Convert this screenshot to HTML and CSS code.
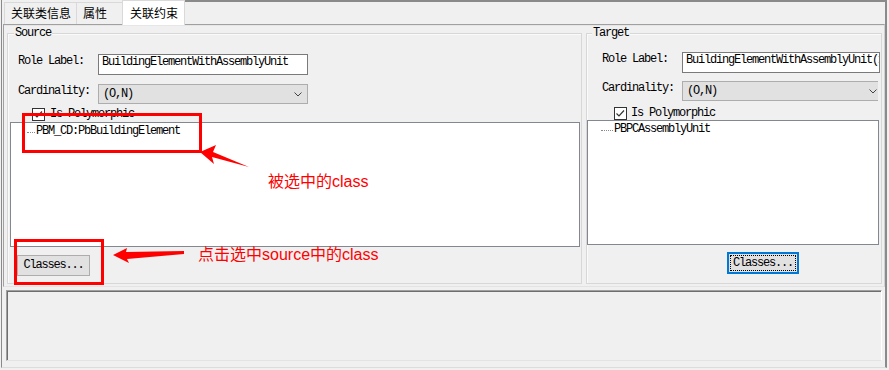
FILE: index.html
```html
<!DOCTYPE html>
<html>
<head>
<meta charset="utf-8">
<link rel="stylesheet" href="styles.css">
</head>
<body>
<div class="screen">
  <div class="frame">
    <div class="tabs">
      <div class="tab tab-info">关联类信息</div>
      <div class="tab tab-attr">属性</div>
      <div class="tab tab-active">关联约束</div>
      <div class="tab-fill"></div>
    </div>
    <div class="panel">
      <div class="group group-source">
        <div class="group-title">Source</div>
        <div class="row row-role"><span class="label">Role Label:</span><div class="input input-source">BuildingElementWithAssemblyUnit</div></div>
        <div class="row row-card"><span class="label">Cardinality:</span><div class="select select-source"><span>(O,N)</span><svg class="caret" width="8" height="5" viewBox="0 0 8 5"><polyline points="0.5,0.5 4,4 7.5,0.5" fill="none" stroke="#444" stroke-width="1"/></svg></div></div>
        <div class="row row-poly poly-source"><span class="check"><svg width="13" height="13" viewBox="0 0 13 13"><rect x="0.5" y="0.5" width="12" height="12" fill="#fff" stroke="#333"/><polyline points="2.5,6.5 5,9 10,3.5" fill="none" stroke="#333" stroke-width="1.2"/></svg></span><span>Is Polymorphic</span></div>
        <div class="list list-source"><div class="item"><span class="dots dots-source"></span>PBM_CD:PbBuildingElement</div></div>
        <div class="btn btn-source">Classes...</div>
      </div>
      <div class="group group-target">
        <div class="group-title">Target</div>
        <div class="row row-role"><span class="label">Role Label:</span><div class="input input-target">BuildingElementWithAssemblyUnit(1:N)</div></div>
        <div class="row row-card"><span class="label">Cardinality:</span><div class="select-clip"><div class="select select-target"><span>(O,N)</span><svg class="caret" width="8" height="5" viewBox="0 0 8 5"><polyline points="0.5,0.5 4,4 7.5,0.5" fill="none" stroke="#444" stroke-width="1"/></svg></div></div></div>
        <div class="row row-poly poly-target"><span class="check"><svg width="13" height="13" viewBox="0 0 13 13"><rect x="0.5" y="0.5" width="12" height="12" fill="#fff" stroke="#333"/><polyline points="2.5,6.5 5,9 10,3.5" fill="none" stroke="#333" stroke-width="1.2"/></svg></span><span>Is Polymorphic</span></div>
        <div class="list list-target"><div class="item"><span class="dots dots-target"></span>PBPCAssemblyUnit</div></div>
        <div class="btn btn-target"><span class="focus">Classes...</span></div>
      </div>
    </div>
    <div class="bottom-box"></div>
  </div>

  <svg class="marks" width="889" height="370" viewBox="0 0 889 370">
    <rect x="23.5" y="114.5" width="177" height="37" fill="none" stroke="#ff0000" stroke-width="3"/>
    <rect x="15.5" y="240.5" width="87" height="43" fill="none" stroke="#ff0000" stroke-width="3"/>
    <polygon points="200,152 216,145 213,152 249,167 212,157 214,164" fill="#ff0000"/>
    <polygon points="113,255 127,248 126,252 184,251 184,254 127,259 129,263" fill="#ff0000"/>
  </svg>
  <span class="note note-1">被选中的class</span>
  <span class="note note-2">点击选中source中的class</span>
</div>
</body>
</html>
```

FILE: styles.css
```css
* { box-sizing: border-box; }

html, body {
  margin: 0;
  padding: 0;
  background: #f0f0f0;
}

body {
  width: 889px;
  height: 370px;
  overflow: hidden;
  font-family: "Liberation Mono", "DejaVu Sans Mono", monospace;
  font-size: 12px;
  letter-spacing: -1.2px;
  color: #000;
}

.screen {
  position: relative;
  width: 889px;
  height: 370px;
}

.frame {
  margin: 0 2px 0 1px;
  height: 368px;
  border-left: 1px solid #8a8a8a;
  border-right: 2px solid #8a8a8a;
  border-bottom: 1px solid #dcdcdc;
  padding-left: 1px;
  display: flex;
  flex-direction: column;
}

/* tabs */
.tabs {
  display: flex;
  align-items: flex-end;
  height: 24px;
}

.tab {
  font-family: "Noto Sans CJK SC", "Liberation Sans", sans-serif;
  letter-spacing: 0;
  font-size: 12px;
  line-height: 20px;
  height: 22px;
  border: 1px solid #d9d9d9;
  border-bottom: none;
  background: #f0f0f0;
  padding-left: 6px;
}

.tab-info { width: 73px; margin-left: 1px; }
.tab-attr { width: 47px; margin-left: -1px; }

.tab-active {
  width: 63px;
  height: 25px;
  margin-left: -1px;
  margin-bottom: -1px;
  padding-left: 7px;
  line-height: 23px;
  background: #ffffff;
  position: relative;
  z-index: 1;
}

.tab-fill {
  flex: 1;
  align-self: flex-start;
  border-top: 2px solid #8a8a8a;
}

/* panel */
.panel {
  display: flex;
  gap: 4px;
  border-top: 1px solid #a0a0a0;
  border-left: 1px solid #a0a0a0;
  border-right: 1px solid #d0d0d0;
  border-bottom: 1px solid #e3e3e3;
  box-shadow: inset 0 1px 0 #e6e6e6;
  padding: 8px 2px 2px 3px;
}

.group {
  border: 1px solid #d7d7d7;
  box-shadow: inset 1px 1px 0 #fafafa;
  padding-bottom: 7px;
  display: flex;
  flex-direction: column;
  align-items: flex-start;
}

.group-source { flex: 0 0 575px; }
.group-target { flex: 1; min-width: 0; }

.group-title {
  margin-top: -7px;
  line-height: 12px;
  height: 12px;
  background: #f0f0f0;
  padding: 0 1px;
}

.group-source .group-title { margin-left: 6px; }
.group-target .group-title { margin-left: 5px; }

.row {
  display: flex;
  align-items: center;
}

.group-source .row-role,
.group-source .row-card { padding-left: 10px; }
.group-target .row-role,
.group-target .row-card { padding-left: 15px; }

.label {
  width: 80px;
  flex: 0 0 80px;
  white-space: nowrap;
  line-height: 12px;
  padding-bottom: 7px;
}

.row-role { margin-top: 15px; height: 21px; }
.row-card { margin-top: 9px; height: 20px; }

.group-target .row-role { margin-top: 13px; }
.group-target .row-card { margin-top: 8px; }
.group-target .row-poly { margin-top: 5px; }
.group-target .list { margin-top: 0; }

.input {
  height: 21px;
  background: #fff;
  border: 1px solid #7a7a7a;
  padding-left: 3px;
  line-height: 15px;
  white-space: nowrap;
  overflow: hidden;
}

.input-source { width: 210px; }
.input-target { width: 198px; flex: 0 0 198px; }

.select {
  height: 20px;
  background: #e1e1e1;
  border: 1px solid #adadad;
  padding: 0 5px 0 4px;
  line-height: 18px;
  display: flex;
  align-items: center;
  justify-content: space-between;
}

.select-source { width: 210px; }

.select-clip {
  width: 196px;
  flex: 0 0 196px;
  overflow: hidden;
}

.select-target { width: 201px; }

.caret { display: block; }

.row-poly {
  margin-top: 3px;
  height: 14px;
}

.poly-source { padding-left: 24px; gap: 5px; }
.poly-target { padding-left: 27px; gap: 4px; }

.check { display: flex; }
.check svg { display: block; }

.list {
  margin-top: 1px;
  height: 125px;
  background: #fff;
  border: 1px solid #828790;
  padding-top: 1px;
}

.list-source { width: 570px; margin-left: 2px; }
.list-target { width: 292px; margin-left: 0; }

.item {
  display: flex;
  align-items: center;
  line-height: 14px;
  white-space: nowrap;
}

.dots {
  display: block;
  height: 0;
  border-top: 1px dotted #8a8a8a;
  margin-top: 2px;
}

.dots-source { width: 8px; margin-left: 16px; margin-right: 1px; }
.dots-target { width: 12px; margin-left: 13px; margin-right: 1px; }

.btn {
  margin-top: 8px;
  height: 21px;
  background: #e1e1e1;
  border: 1px solid #adadad;
  text-align: center;
  line-height: 19px;
}

.btn-source { width: 73px; margin-left: 9px; }

.btn-target {
  width: 72px;
  height: 22px;
  margin-top: 7px;
  margin-left: 140px;
  border: 2px solid #0078d7;
  padding: 1px;
  line-height: 16px;
}

.focus {
  display: block;
  height: 16px;
  border: 1px dotted #000;
  line-height: 14px;
}

/* bottom */
.bottom-box {
  margin: 3px 3px 0 3px;
  height: 71px;
  border-top: 1px solid #a0a0a0;
  border-left: 1px solid #a0a0a0;
  border-right: 1px solid #ffffff;
  border-bottom: 1px solid #e3e3e3;
  box-shadow: inset 1px 1px 0 #6e6e6e;
}

/* annotations */
.marks {
  position: absolute;
  left: 0;
  top: 0;
  pointer-events: none;
}

.note {
  position: absolute;
  font-family: "Liberation Sans", "Noto Sans CJK SC", sans-serif;
  font-size: 16px;
  letter-spacing: 0;
  line-height: 18px;
  color: #ff0000;
  white-space: nowrap;
}

.note-1 { left: 268px; top: 173px; }
.note-2 { left: 198px; top: 246px; }
```
